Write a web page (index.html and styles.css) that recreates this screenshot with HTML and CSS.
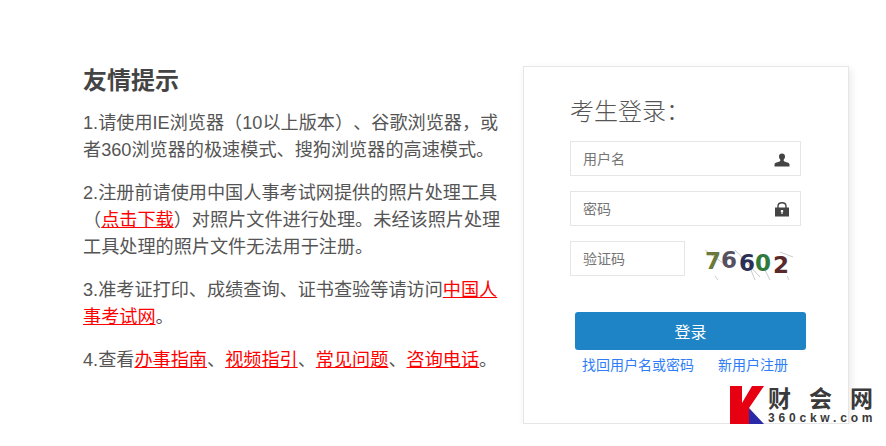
FILE: index.html
```html
<!DOCTYPE html>
<html lang="zh-CN">
  <head>
    <meta charset="UTF-8" />
    <meta name="viewport" content="width=device-width, initial-scale=1.0" />
    <title>考生登录</title>
    <link rel="stylesheet" href="styles.css">
  </head>
  <body>
    <div class="main">
      <div class="tips">
        <h2>友情提示</h2>
        <p>1.请使用IE浏览器（10以上版本）、谷歌浏览器，或者360浏览器的极速模式、搜狗浏览器的高速模式。</p>
        <p>2.注册前请使用中国人事考试网提供的照片处理工具（<a href="#">点击下载</a>）对照片文件进行处理。未经该照片处理工具处理的照片文件无法用于注册。</p>
        <p>3.准考证打印、成绩查询、证书查验等请访问<a href="#">中国人事考试网</a>。</p>
        <p>4.查看<a href="#">办事指南</a>、<a href="#">视频指引</a>、<a href="#">常见问题</a>、<a href="#">咨询电话</a>。</p>
      </div>

      <div class="login-box">
        <div class="login-title">考生登录：</div>

        <div class="field">
          <input type="text" placeholder="用户名" />
          <svg class="field-icon" viewBox="0 0 16 16" width="16" height="16">
            <path d="M8 2.500c1.900 0 3 1.300 3 3.100 0 1.300-.5 2.400-1.300 3.100v1.100c0 .5.900.9 2.700 1.400 1.800.5 3.100.9 3.100 2.200v2H.5v-2c0-1.300 1.300-1.700 3.100-2.200 1.800-.5 2.700-.9 2.700-1.400V8.700C5.500 8 5 6.900 5 5.600c0-1.800 1.100-3.100 3-3.100z" fill="#444"/>
          </svg>
        </div>

        <div class="field">
          <input type="password" placeholder="密码" />
          <svg class="field-icon" viewBox="0 0 16 16" width="16" height="16">
            <path d="M4 7V5.200C4 3 5.700 1.700 8 1.700s4 1.300 4 3.500V7" fill="none" stroke="#444" stroke-width="1.400"/>
            <path d="M1 6.500h14v9H1zM8 9c-.8 0-1.300.5-1.300 1.200 0 .4.200.8.700 1v1.800h1.200v-1.800c.5-.2.700-.6.700-1C9.300 9.500 8.800 9 8 9z" fill="#444" fill-rule="evenodd"/>
          </svg>
        </div>

        <div class="captcha-row">
          <div class="field short">
            <input type="text" placeholder="验证码" />
          </div>
          <svg class="captcha" viewBox="0 0 99 36" width="99" height="36">
            <g stroke="#b5b5b5" stroke-width="0.7">
              <line x1="3" y1="6" x2="21" y2="19"/>
              <line x1="33" y1="6" x2="58" y2="33"/>
              <line x1="78" y1="8" x2="91" y2="13"/>
              <line x1="49" y1="26" x2="53" y2="36"/>
              <line x1="62" y1="24" x2="68" y2="36"/>
              <line x1="13" y1="32" x2="16" y2="36"/>
              <line x1="85" y1="32" x2="87" y2="36"/>
            </g>
            <g class="captcha-text">
              <text x="3" y="25" fill="#6b7a3a">7</text>
              <text x="19" y="24" fill="#57505f">6</text>
              <text x="37" y="27" fill="#2a2f55">6</text>
              <text x="53" y="27" fill="#2f7a3c">0</text>
              <text x="71" y="29" fill="#5a2a2a">2</text>
            </g>
          </svg>
        </div>

        <button class="login-btn">登录</button>

        <div class="login-links">
          <a href="#">找回用户名或密码</a>
          <a href="#">新用户注册</a>
        </div>
      </div>
    </div>

    <div class="watermark">
      <svg viewBox="0 0 34 38" width="34" height="38">
        <polygon points="0,0 12,0 12,17 22,0 34,0 19,22 19,38 0,38" fill="#e60012"/>
        <polygon points="19,22 34,38 19,38" fill="#2a2aa8"/>
      </svg>
      <div class="watermark-text">
        <div class="wm-cn"><span>财</span><span>会</span><span>网</span></div>
        <div class="wm-en">360ckw.com</div>
      </div>
    </div>
  </body>
</html>
```

FILE: styles.css
```css
body {
  font-family: "Liberation Sans", "Noto Sans CJK SC", sans-serif;
  margin: 0;
  padding: 0;
  background-color: #fff;
  color: #555;
  text-spacing-trim: space-all;
}

.main {
  display: flex;
  align-items: flex-start;
  padding: 66px 0 0 83px;
}

.tips {
  width: 418px;
  font-size: 18.15px;
  line-height: 27px;
}

.tips h2 {
  margin: 0 0 14px;
  font-size: 24px;
  line-height: 30px;
  color: #444;
}

.tips p {
  margin: 0 0 16px;
}

.tips a {
  color: #f00;
}

.login-box {
  width: 278px;
  height: 356px;
  margin-left: 22px;
  padding-left: 46px;
  background-color: #fff;
  border: 1px solid #e6e6e6;
  box-shadow: 2px 3px 8px rgba(0, 0, 0, 0.09);
}

.login-title {
  margin-top: 28px;
  margin-bottom: 12px;
  font-size: 24px;
  font-weight: 300;
  line-height: 34px;
  color: #555;
}

.field {
  display: flex;
  align-items: center;
  width: 229px;
  height: 33px;
  margin-bottom: 15px;
  border: 1px solid #e6e6e6;
}

.field input {
  flex: 1;
  min-width: 0;
  padding: 0 0 0 12px;
  border: none;
  outline: none;
  font-family: inherit;
  font-size: 14px;
  color: #555;
}

.field input::placeholder {
  color: #757575;
  opacity: 1;
}

.field-icon {
  margin-right: 10px;
}

.captcha-row {
  display: flex;
  justify-content: space-between;
  width: 231px;
}

.field.short {
  width: 113px;
}

.captcha {
  margin-top: 3px;
}

.captcha-text {
  font-family: "DejaVu Sans", sans-serif;
  font-size: 23px;
  font-weight: bold;
}

.login-btn {
  display: block;
  width: 231px;
  height: 38px;
  margin: 21px 0 0 5px;
  background-color: #1e84c6;
  color: #fff;
  border: none;
  border-radius: 3px;
  font-family: inherit;
  font-size: 16px;
  cursor: pointer;
}

.login-links {
  display: flex;
  gap: 24px;
  margin: 6px 0 0 12px;
  font-size: 14px;
  line-height: 18px;
}

.login-links a {
  color: #2e7df6;
  text-decoration: none;
}

/* site mark sits over the corner of the card */
.watermark {
  position: absolute;
  left: 730px;
  top: 386px;
  display: flex;
  gap: 4px;
}

.watermark-text {
  width: 105px;
}

.wm-cn {
  display: flex;
  justify-content: space-between;
  font-size: 23px;
  font-weight: bold;
  line-height: 27px;
  color: #3a3a3a;
}

.wm-en {
  font-size: 12px;
  font-weight: bold;
  line-height: 11px;
  letter-spacing: 3.800px;
  white-space: nowrap;
  color: #3a3a3a;
}
```
